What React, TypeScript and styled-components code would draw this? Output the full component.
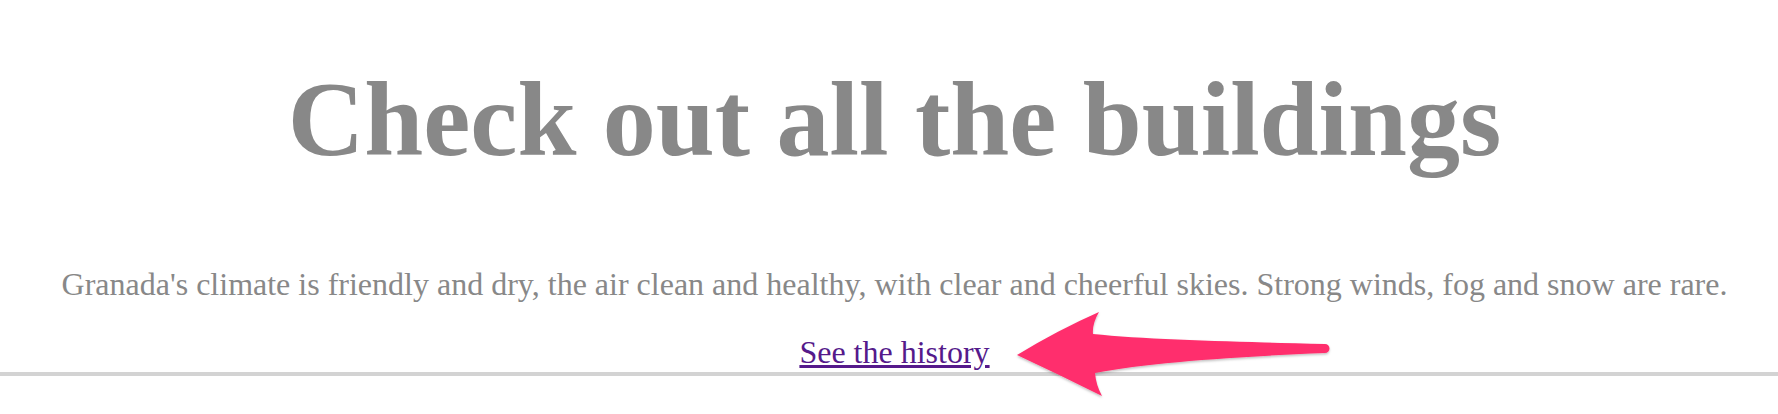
import React from "react";
import styled, { createGlobalStyle } from "styled-components";

const Global = createGlobalStyle`
  html, body { margin: 0; padding: 0; background: #ffffff; }
  body { font-family: "Liberation Serif", "Times New Roman", serif; }
`;

const Page = styled.main`
  position: relative;
  width: 100%;
  height: 414px;
  display: flex;
  flex-direction: column;
`;

const Content = styled.section`
  display: flex;
  flex-direction: column;
  align-items: center;
  text-align: center;
  padding-left: 11px;
`;

const Title = styled.h1`
  margin: 67px 0 0;
  font-size: 106px;
  line-height: 106px;
  font-weight: 700;
  color: #888888;
  white-space: nowrap;
`;

const Lead = styled.p`
  margin: 95px 0 0;
  font-size: 32px;
  line-height: 32px;
  color: #888888;
  white-space: nowrap;
`;

const HistoryLink = styled.a`
  margin-top: 36px;
  font-size: 32px;
  line-height: 32px;
  color: #551a8b;
  text-decoration: underline;
`;

const Rule = styled.hr`
  width: 100%;
  margin: 4px 0 0;
  border: 0;
  height: 4px;
  background: #d3d3d3;
`;

const Arrow = styled.svg`
  position: absolute;
  left: 1000px;
  top: 300px;
  overflow: visible;
`;

export default function App() {
  return (
    <>
      <Global />
      <Page>
        <Content>
          <Title>Check out all the buildings</Title>
          <Lead>
            Granada's climate is friendly and dry, the air clean and healthy, with clear and cheerful skies. Strong winds, fog and snow are rare.
          </Lead>
          <HistoryLink href="#history">See the history</HistoryLink>
        </Content>
        <Rule />
        <Arrow width="340" height="110" viewBox="0 0 340 110">
          <defs>
            <filter id="sh" x="-10%" y="-20%" width="120%" height="150%">
              <feDropShadow dx="0" dy="1.5" stdDeviation="1.2" floodColor="#000" floodOpacity="0.25" />
            </filter>
          </defs>
          <path
            filter="url(#sh)"
            fill="#ff2f6d"
            d="M17,55 Q58,30 99,12 Q92,24 93,34 C150,40 250,42 325,44 A4.5,4.5 0 0 1 325,53 C250,56 150,62 95,73 Q96,85 102,96 Q60,75 17,55 Z"
          />
        </Arrow>
      </Page>
    </>
  );
}
